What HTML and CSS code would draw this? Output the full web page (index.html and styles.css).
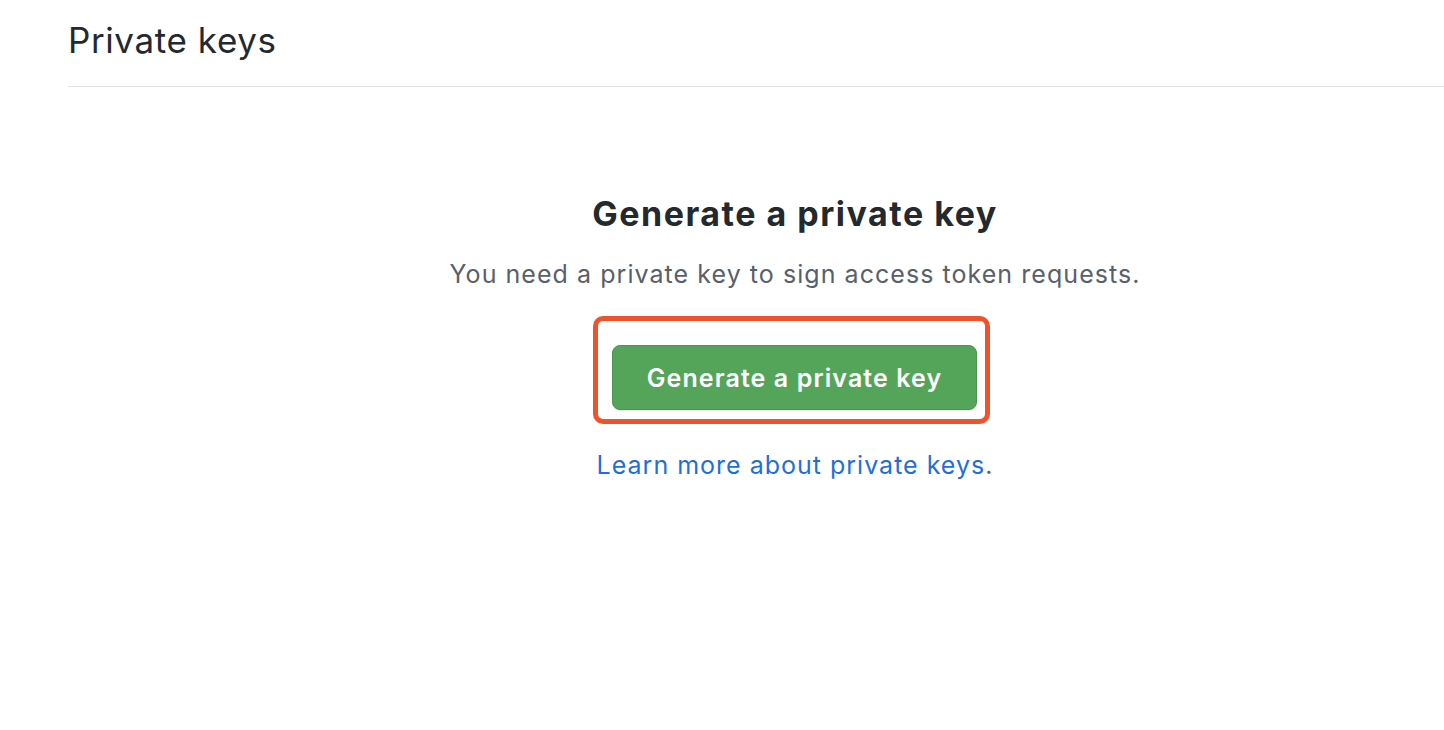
FILE: index.html
```html
<!DOCTYPE html>
<html lang="en">
<head>
<meta charset="utf-8">
<title>Private keys</title>
<link rel="stylesheet" href="styles.css">
</head>
<body>
<div class="page">
  <div class="subhead">
    <h2 class="subhead-title">Private keys</h2>
  </div>
  <div class="blankslate">
    <h3 class="blankslate-title">Generate a private key</h3>
    <p class="blankslate-text">You need a private key to sign access token requests.</p>
    <div class="highlight">
      <button class="btn-primary" type="button">Generate a private key</button>
    </div>
    <p class="learn"><a href="#" class="link">Learn more about private keys</a>.</p>
  </div>
</div>
</body>
</html>
```
FILE: styles.css
```css
html, body {
  margin: 0;
  padding: 0;
  background: #ffffff;
  overflow: hidden;
}
body {
  font-family: Inter, "Noto Sans", "Liberation Sans", sans-serif;
  color: #24292e;
}
.page {
  width: 1454px;
  margin-left: 68px;
}
.subhead {
  border-bottom: 1px solid #e4e4e8;
  padding-top: 16px;
  padding-bottom: 22px;
}
.subhead-title {
  margin: 0;
  font-size: 35px;
  font-weight: 400;
  letter-spacing: 0.6px;
  line-height: 48px;
  color: #24292e;
}
.blankslate {
  text-align: center;
  padding-top: 106px;
}
.blankslate-title {
  margin: 0;
  font-size: 34px;
  font-weight: 700;
  letter-spacing: 1.5px;
  line-height: 42px;
  color: #24292e;
}
.blankslate-text {
  margin: 22px 0 0;
  font-size: 25px;
  letter-spacing: 1.05px;
  line-height: 34px;
  color: #586069;
}
.highlight {
  display: inline-block;
  margin-top: 25px;
  margin-right: 7px;
  padding: 24px 8px 9px 14px;
  border: 5px solid #f0522b;
  border-radius: 10px;
}
.btn-primary {
  display: block;
  width: 365px;
  height: 65px;
  padding: 0;
  font-family: inherit;
  font-size: 25px;
  font-weight: 600;
  letter-spacing: 1.1px;
  color: #ffffff;
  background: #54a45a;
  border: 1px solid #4b9451;
  border-radius: 8px;
  box-shadow: 0 1px 0 rgba(27, 31, 35, 0.1);
  cursor: pointer;
}
.learn {
  margin: 24px 0 0;
  font-size: 25px;
  letter-spacing: 1px;
  line-height: 34px;
  color: #586069;
}
.link {
  color: #1f6fd6;
  text-decoration: none;
}
```
